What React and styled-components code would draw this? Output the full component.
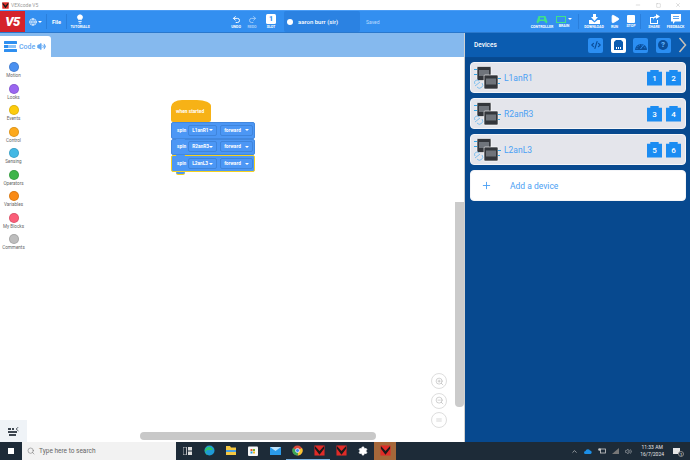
import React from 'react';
import styled, { createGlobalStyle } from 'styled-components';
import { Globe, Lightbulb, Undo2, Redo2, Play, Plus, ChevronUp, Volume2, Settings, Search, ZoomIn, ZoomOut, Equal, Minus, X, Square, Code2 } from 'lucide-react';

const GlobalStyle = createGlobalStyle`
  html, body { margin: 0; padding: 0; background: #fff; overflow: hidden; }
  * { box-sizing: border-box; }
`;

const Page = styled.div`
  width: 690px;
  height: 460px;
  display: flex;
  flex-direction: column;
  font-family: Roboto, "Liberation Sans", sans-serif;
  overflow: hidden;
`;

// window title bar
const TitleBar = styled.div`
  height: 10px;
  display: flex;
  align-items: center;
  background: #fff;
  padding: 0 2px;
  color: #9a9a9a;
  font-size: 5px;
`;
const TitleText = styled.span`
  margin-left: 2px;
  flex: 1;
`;
const WinBtn = styled.div`
  width: 20px;
  display: flex;
  justify-content: center;
  color: #777;
`;

// main toolbar
const Toolbar = styled.div`
  height: 23px;
  display: flex;
  align-items: stretch;
  background: #338ff0;
  border-top: 1px solid #4a9cf5;
  border-bottom: 1px solid #2a78cc;
  color: #fff;
`;
const Logo = styled.div`
  width: 25px;
  background: #d5232b;
  display: flex;
  align-items: center;
  justify-content: center;
  font-weight: 900;
  font-style: italic;
  font-size: 13px;
  letter-spacing: -0.5px;
`;
const Tool = styled.div`
  width: ${(p) => p.w || 20}px;
  margin-left: ${(p) => p.ml || 0}px;
  display: flex;
  flex-direction: column;
  align-items: center;
  justify-content: center;
  gap: 1px;
  font-size: 3.6px;
  font-weight: 700;
  white-space: nowrap;
  opacity: ${(p) => (p.dim ? 0.55 : 1)};
`;
const Divider = styled.div`
  width: 1px;
  margin: 3px 0;
  margin-left: ${(p) => p.ml || 0}px;
  background: #2a7fdc;
`;
const MenuText = styled.div`
  font-size: 5.5px;
  font-weight: 700;
  width: 19px;
  text-align: center;
  align-self: center;
`;
const Caret = styled.span`
  width: 0;
  height: 0;
  border-left: 2px solid transparent;
  border-right: 2px solid transparent;
  border-top: 2px solid ${(p) => p.color || '#fff'};
  display: inline-block;
  flex: none;
`;
const GlobeWrap = styled.div`
  width: 21px;
  display: flex;
  align-items: center;
  justify-content: center;
  gap: 1px;
`;
const SlotBadge = styled.div`
  width: 10px;
  height: 10px;
  border-radius: 1.5px;
  background: #fff;
  color: #338ff0;
  font-size: 7px;
  font-weight: 900;
  line-height: 10px;
  text-align: center;
`;
const ProjectName = styled.div`
  width: 76px;
  margin-left: 6px;
  background: #2b82e2;
  border-radius: 2px;
  display: flex;
  align-items: center;
  padding-left: 3px;
  gap: 5px;
  font-size: 6px;
  font-weight: 500;
  white-space: nowrap;
`;
const Hex = styled.span`
  width: 6px;
  height: 6px;
  background: #fff;
  border-radius: 50%;
  flex: none;
`;
const Saved = styled.div`
  font-size: 5px;
  color: #bcdcff;
  margin-left: 6px;
  align-self: center;
  width: 164px;
`;
const BrainRect = styled.div`
  width: 10px;
  height: 7px;
  border: 1.5px solid #3fe08a;
`;
const BrainIcon = styled.div`
  display: flex;
  align-items: center;
  gap: 2px;
`;
const StopIcon = styled.div`
  width: 8px;
  height: 8px;
  background: #fff;
  border-radius: 1px;
`;

// workspace
const Main = styled.div`
  flex: 1;
  display: flex;
  min-height: 0;
`;
const Workspace = styled.div`
  width: 465px;
  flex: none;
  display: flex;
  flex-direction: column;
  position: relative;
  border-right: 1px solid #d0d0d0;
`;
const TabBand = styled.div`
  height: 24px;
  background: #85b9ee;
  padding-top: 3px;
  display: flex;
  flex: none;
`;
const CodeTab = styled.div`
  width: 51px;
  background: #fff;
  border-radius: 0 3px 0 0;
  display: flex;
  align-items: center;
  gap: 2px;
  padding-left: 4px;
  color: #62a8f2;
  font-size: 7px;
  font-weight: 500;
`;
const CanvasRow = styled.div`
  flex: 1;
  display: flex;
  min-height: 0;
`;
const Palette = styled.div`
  width: 27px;
  display: flex;
  flex-direction: column;
  justify-content: space-between;
  flex: none;
`;
const Categories = styled.div`
  display: flex;
  flex-direction: column;
  padding-top: 5px;
`;
const Category = styled.div`
  height: 21.5px;
  display: flex;
  flex-direction: column;
  align-items: center;
  color: #666;
  font-size: 4.6px;
  white-space: nowrap;
  gap: 1px;
`;
const Dot = styled.div`
  width: 10px;
  height: 10px;
  border-radius: 50%;
  flex: none;
  background: ${(p) => p.color};
  border: 0.5px solid rgba(0, 0, 0, 0.12);
`;
const PaletteFoot = styled.div`
  height: 22px;
  background: #eff3f7;
  display: flex;
  align-items: center;
  justify-content: center;
`;
const Canvas = styled.div`
  flex: 1;
  position: relative;
  background: #fff;
`;

// script on the free canvas
const Stack = styled.div`
  position: absolute;
  left: 144px;
  top: 43px;
  display: flex;
  flex-direction: column;
  align-items: flex-start;
`;
const Hat = styled.div`
  width: 40px;
  height: 22px;
  background: #f7b216;
  border-radius: 11px 14px 2px 2px / 7px 6px 2px 2px;
  color: #fff;
  font-size: 4.8px;
  font-weight: 700;
  padding: 9px 0 0 5px;
  position: relative;
  white-space: nowrap;
  &::after {
    content: '';
    position: absolute;
    left: 5px;
    bottom: -2px;
    width: 9px;
    height: 2px;
    background: #f7b216;
    border-radius: 0 0 3px 3px;
  }
`;
const Block = styled.div`
  width: 84px;
  height: ${(p) => (p.selected ? 17 : 16.5)}px;
  background: #4c97f5;
  border-radius: 2px;
  display: flex;
  align-items: center;
  gap: 2px;
  padding-left: 5px;
  color: #fff;
  font-size: 4.8px;
  font-weight: 700;
  position: relative;
  border: 1px solid ${(p) => (p.selected ? '#f6d21f' : '#4288df')};
  &::after {
    content: '';
    position: absolute;
    left: 4px;
    bottom: -3px;
    width: 9px;
    height: 2px;
    background: #4c97f5;
    border-radius: 0 0 3px 3px;
    z-index: 1;
    box-shadow: ${(p) => (p.selected ? '0 1px 0 #f6d21f' : 'none')};
  }
`;
const Field = styled.div`
  height: 11px;
  width: ${(p) => p.w}px;
  margin-left: ${(p) => p.ml || 0}px;
  border: 0.5px solid #3f85dc;
  border-radius: 2px;
  display: flex;
  align-items: center;
  justify-content: space-between;
  padding: 0 3px;
`;

// zoom controls and scrollbars sit over the canvas
const ZoomStack = styled.div`
  position: absolute;
  right: 17px;
  bottom: 14px;
  display: flex;
  flex-direction: column;
  gap: 3.5px;
`;
const ZoomBtn = styled.div`
  width: 16px;
  height: 16px;
  border-radius: 50%;
  border: 1px solid #dedede;
  background: #fff;
  color: #9a9a9a;
  display: flex;
  align-items: center;
  justify-content: center;
`;
const VScroll = styled.div`
  position: absolute;
  right: 0;
  top: 145px;
  width: 9px;
  height: 205px;
  background: #cbcbcb;
  border-radius: 0 0 4px 4px;
`;
const HScroll = styled.div`
  position: absolute;
  left: 113px;
  bottom: 2px;
  width: 236px;
  height: 8px;
  background: #c8c8c8;
  border-radius: 4px;
`;

// devices panel
const Panel = styled.div`
  flex: 1;
  min-width: 0;
  background: #07498f;
  display: flex;
  flex-direction: column;
`;
const PanelHead = styled.div`
  height: 25px;
  background: #0b5cb0;
  border-bottom: 1px solid #084a92;
  display: flex;
  align-items: center;
  padding-left: 9px;
  color: #fff;
  font-size: 6.5px;
  font-weight: 500;
`;
const PanelTitle = styled.div`
  width: 114px;
`;
const HeadBtn = styled.div`
  width: 15px;
  height: 15px;
  border-radius: 2px;
  margin-right: 7.5px;
  background: ${(p) => (p.active ? '#fff' : '#2b8ef2')};
  color: ${(p) => (p.active ? '#0b5cb0' : '#0b4f9b')};
  display: flex;
  align-items: center;
  justify-content: center;
  flex: none;
`;
const HelpDot = styled.div`
  width: 10px;
  height: 10px;
  border-radius: 50%;
  background: #0b4f9b;
  color: #5fb0f7;
  font-size: 8px;
  font-weight: 900;
  line-height: 10px;
  text-align: center;
`;
const Cards = styled.div`
  display: flex;
  flex-direction: column;
  gap: 5px;
  padding: 4px 4px 0 5px;
`;
const Card = styled.div`
  height: 31px;
  background: ${(p) => (p.add ? '#fff' : '#e4e5eb')};
  border: 1px solid #f4f5f8;
  border-radius: 4px;
  display: flex;
  align-items: center;
  color: #4aa0f4;
  font-size: 8.5px;
`;
const CardIcon = styled.div`
  width: 33px;
  display: flex;
  justify-content: center;
  flex: none;
`;
const CardName = styled.div`
  flex: 1;
`;
const Ports = styled.div`
  display: flex;
  gap: 4px;
  margin-right: 4px;
`;
const Port = styled.div`
  width: 15px;
  height: 16px;
  background: #1b8cf2;
  color: #fff;
  font-size: 8px;
  font-weight: 500;
  display: flex;
  align-items: center;
  justify-content: center;
  padding-top: 2px;
  clip-path: polygon(0 14%, 22% 14%, 22% 0, 78% 0, 78% 14%, 100% 14%, 100% 100%, 0 100%);
`;
const AddIcon = styled.div`
  width: 39px;
  padding-left: 10px;
  display: flex;
  flex: none;
`;

// windows taskbar
const Taskbar = styled.div`
  height: 18px;
  flex: none;
  background: #1d2b38;
  display: flex;
  align-items: stretch;
  color: #e6e6e6;
`;
const StartBtn = styled.div`
  width: 22px;
  display: flex;
  align-items: center;
  justify-content: center;
`;
const WinLogo = styled.div`
  display: grid;
  grid-template-columns: 3px 3px;
  gap: 0.7px;
  & > i {
    width: 3px;
    height: 3px;
    background: #fff;
    display: block;
  }
`;
const SearchBox = styled.div`
  width: 154px;
  background: #f2f2f2;
  color: #666;
  font-size: 6.5px;
  display: flex;
  align-items: center;
  gap: 4px;
  padding-left: 5px;
`;
const TaskIcons = styled.div`
  display: flex;
`;
const TaskIcon = styled.div`
  width: 22px;
  display: flex;
  align-items: center;
  justify-content: center;
  background: ${(p) => (p.active ? '#a5683a' : 'transparent')};
  border-bottom: 1px solid ${(p) => (p.open ? '#7fb4e0' : 'transparent')};
`;
const Tray = styled.div`
  margin-left: auto;
  display: flex;
  align-items: center;
  gap: 6px;
  padding-right: 10px;
  font-size: 5px;
`;
const Clock = styled.div`
  text-align: center;
  line-height: 7.5px;
  margin: 0 3px 0 2px;
`;
const Notif = styled.div`
  width: 7px;
  height: 6px;
  background: #e6e6e6;
  position: relative;
`;
const NotifBadge = styled.span`
  position: absolute;
  right: -4px;
  bottom: -3px;
  width: 6px;
  height: 6px;
  border-radius: 50%;
  background: #1d2b38;
  border: 0.5px solid #888;
  color: #fff;
  font-size: 4px;
  line-height: 5px;
  text-align: center;
`;

const VexIcon = ({ size = 10 }) => (
  <svg width={size} height={size} viewBox="0 0 12 12">
    <rect x="0.5" y="0.5" width="11" height="11" fill="#e02b27" />
    <path d="M1 1 L6 6.500 L11 1 L11 4 L6 10.500 L1 4 Z" fill="#1a1a1a" />
  </svg>
);

const ControllerIcon = () => (
  <svg width="12" height="9" viewBox="0 0 12 9">
    <path d="M2.500 1h7l2 6-1 1.500L8 6H4L1.500 8.500 .5 7z" fill="#3fe08a" />
    <rect x="4" y="2.500" width="4" height="2" fill="#338ff0" />
  </svg>
);

const DownloadIcon = () => (
  <svg width="11" height="10" viewBox="0 0 11 10">
    <path d="M4 0h3v3h2L5.500 7 2 3h2z" fill="#fff" />
    <path d="M0 6h2.500l3 2.500 3-2.500H11v4H0z" fill="#fff" />
  </svg>
);

const ShareIcon = () => (
  <svg width="11" height="10" viewBox="0 0 11 10">
    <path d="M1 3h4v1H2v5h6V6h1v4H1z" fill="#fff" />
    <path d="M7 0l4 2.500L7 5V3.500C5.500 3.500 4.500 4.500 4 6c0-2.500 1-4 3-4z" fill="#fff" />
  </svg>
);

const FeedbackIcon = () => (
  <svg width="10" height="10" viewBox="0 0 10 10">
    <path d="M0 0h10v7.500H4L2 10V7.500H0z" fill="#fff" />
    <rect x="2" y="2" width="6" height="0.8" fill="#338ff0" />
    <rect x="2" y="4" width="6" height="0.8" fill="#338ff0" />
  </svg>
);

const GaugeIcon = () => (
  <svg width="12" height="9" viewBox="0 0 12 9">
    <path d="M0 9a6 6 0 0 1 12 0z" fill="#0b4f9b" />
    <path d="M2 8a4 4 0 0 1 8 0" fill="none" stroke="#2b8ef2" strokeWidth="0.8" strokeDasharray="1 1" />
    <path d="M5.500 8l3-4" stroke="#2b8ef2" strokeWidth="1" />
  </svg>
);

const BlocksIcon = ({ size = 13, color = '#2f8ff0' }) => (
  <svg width={size} height={size} viewBox="0 0 13 13">
    <rect x="0" y="1" width="13" height="3" rx="0.5" fill={color} />
    <rect x="0" y="5" width="4" height="3" fill={color} />
    <rect x="0" y="9" width="13" height="3" rx="0.5" fill={color} />
    <rect x="4" y="5" width="8" height="3" fill={color} opacity="0.55" />
  </svg>
);

const BackpackIcon = () => (
  <svg width="11" height="9" viewBox="0 0 11 9">
    <rect x="0" y="1" width="3" height="2" fill="#3d4650" />
    <rect x="4" y="1" width="2" height="2" fill="#3d4650" />
    <rect x="0" y="4" width="9" height="2" fill="#3d4650" />
    <rect x="1" y="7" width="7" height="2" fill="#3d4650" />
    <path d="M10.500 0L8 2l2.500 2" fill="none" stroke="#3d4650" strokeWidth="0.8" />
  </svg>
);

const MotorGroupIcon = () => (
  <svg width="27" height="24" viewBox="0 0 27 24">
    <rect x="3" y="0.5" width="14" height="14" rx="1" fill="#33363b" stroke="#fff" strokeWidth="0.6" />
    <rect x="5" y="4" width="10" height="6" fill="#6f747b" />
    <rect x="0" y="3" width="3" height="1" fill="#35a7e8" />
    <rect x="0" y="8" width="3" height="1" fill="#35a7e8" />
    <rect x="10" y="9" width="14" height="14" rx="1" fill="#33363b" stroke="#fff" strokeWidth="0.6" />
    <rect x="12" y="12.500" width="10" height="6" fill="#6f747b" />
    <rect x="24" y="12" width="3" height="1" fill="#35a7e8" />
    <rect x="24" y="17" width="2" height="1" fill="#35a7e8" />
    <path d="M1 20l5-4M1 18a2.500 2.500 0 0 1 4-3M3 21a2.500 2.500 0 0 0 5-4" stroke="#7fc0ee" strokeWidth="1" fill="none" />
  </svg>
);

const categories = [
  ['Motion', '#4a90f0'],
  ['Looks', '#9a66f0'],
  ['Events', '#fdcb0c'],
  ['Control', '#fda91b'],
  ['Sensing', '#43b8e4'],
  ['Operators', '#3eb54a'],
  ['Variables', '#f98a15'],
  ['My Blocks', '#fb5e78'],
  ['Comments', '#bdbdbd'],
];

const blocks = [
  { motor: 'L1anR1' },
  { motor: 'R2anR3' },
  { motor: 'L2anL3', selected: true },
];

const devices = [
  { name: 'L1anR1', ports: [1, 2] },
  { name: 'R2anR3', ports: [3, 4] },
  { name: 'L2anL3', ports: [5, 6] },
];

export default function App() {
  return (
    <Page>
      <GlobalStyle />
      <TitleBar>
        <VexIcon size={7} />
        <TitleText>VEXcode V5</TitleText>
        <WinBtn><Minus size={6} strokeWidth={1} /></WinBtn>
        <WinBtn><Square size={5} strokeWidth={1} /></WinBtn>
        <WinBtn><X size={6} strokeWidth={1} /></WinBtn>
      </TitleBar>

      <Toolbar>
        <Logo>V5</Logo>
        <GlobeWrap>
          <Globe size={8} />
          <Caret />
        </GlobeWrap>
        <Divider />
        <MenuText>File</MenuText>
        <Divider />
        <Tool w={26}>
          <Lightbulb size={10} fill="#fff" />
          TUTORIALS
        </Tool>
        <Tool w={14} ml={136}>
          <Undo2 size={9} strokeWidth={2.500} />
          UNDO
        </Tool>
        <Tool w={14} ml={2} dim>
          <Redo2 size={9} strokeWidth={2.500} />
          REDO
        </Tool>
        <Tool w={14} ml={5}>
          <SlotBadge>1</SlotBadge>
          SLOT
        </Tool>
        <ProjectName>
          <Hex />
          aaron burr (sir)
        </ProjectName>
        <Saved>Saved</Saved>
        <Tool w={24}>
          <ControllerIcon />
          CONTROLLER
        </Tool>
        <Tool w={20}>
          <BrainIcon>
            <BrainRect />
            <Caret />
          </BrainIcon>
          BRAIN
        </Tool>
        <Divider ml={4} />
        <Tool w={24} ml={3}>
          <DownloadIcon />
          DOWNLOAD
        </Tool>
        <Tool w={15} ml={1}>
          <Play size={10} fill="#fff" />
          RUN
        </Tool>
        <Tool w={18}>
          <StopIcon />
          STOP
        </Tool>
        <Divider />
        <Tool w={20} ml={3}>
          <ShareIcon />
          SHARE
        </Tool>
        <Tool w={23}>
          <FeedbackIcon />
          FEEDBACK
        </Tool>
      </Toolbar>

      <Main>
        <Workspace>
          <TabBand>
            <CodeTab>
              <BlocksIcon />
              Code
              <Volume2 size={9} strokeWidth={2.500} fill="#62a8f2" />
            </CodeTab>
          </TabBand>
          <CanvasRow>
            <Palette>
              <Categories>
                {categories.map(([label, color]) => (
                  <Category key={label}>
                    <Dot color={color} />
                    {label}
                  </Category>
                ))}
              </Categories>
              <PaletteFoot>
                <BackpackIcon />
              </PaletteFoot>
            </Palette>
            <Canvas>
              <Stack>
                <Hat>when started</Hat>
                {blocks.map((b) => (
                  <Block key={b.motor} selected={b.selected}>
                    spin
                    <Field w={29}>{b.motor}<Caret /></Field>
                    <Field w={33} ml={1}>forward<Caret /></Field>
                  </Block>
                ))}
              </Stack>
              <ZoomStack>
                <ZoomBtn><ZoomIn size={9} strokeWidth={1.200} /></ZoomBtn>
                <ZoomBtn><ZoomOut size={9} strokeWidth={1.200} /></ZoomBtn>
                <ZoomBtn><Equal size={8} strokeWidth={1.200} /></ZoomBtn>
              </ZoomStack>
              <VScroll />
              <HScroll />
            </Canvas>
          </CanvasRow>
        </Workspace>

        <Panel>
          <PanelHead>
            <PanelTitle>Devices</PanelTitle>
            <HeadBtn><Code2 size={10} strokeWidth={3} /></HeadBtn>
            <HeadBtn active>
              <svg width="9" height="10" viewBox="0 0 9 10">
                <path d="M2 0h5l2 2v8H0V2z" fill="#0b5cb0" />
                <rect x="2" y="7" width="1" height="2" fill="#fff" />
                <rect x="4" y="7" width="1" height="2" fill="#fff" />
                <rect x="6" y="7" width="1" height="2" fill="#fff" />
              </svg>
            </HeadBtn>
            <HeadBtn><GaugeIcon /></HeadBtn>
            <HeadBtn><HelpDot>?</HelpDot></HeadBtn>
            <svg width="10" height="16" viewBox="0 0 10 16">
              <path d="M1.500 1l6 7-6 7" fill="none" stroke="#c9c2b8" strokeWidth="1.500" />
            </svg>
          </PanelHead>
          <Cards>
            {devices.map((d) => (
              <Card key={d.name}>
                <CardIcon><MotorGroupIcon /></CardIcon>
                <CardName>{d.name}</CardName>
                <Ports>
                  {d.ports.map((n) => <Port key={n}>{n}</Port>)}
                </Ports>
              </Card>
            ))}
            <Card add>
              <AddIcon><Plus size={11} strokeWidth={2} /></AddIcon>
              Add a device
            </Card>
          </Cards>
        </Panel>
      </Main>

      <Taskbar>
        <StartBtn>
          <WinLogo><i /><i /><i /><i /></WinLogo>
        </StartBtn>
        <SearchBox>
          <Search size={8} strokeWidth={1.500} />
          Type here to search
        </SearchBox>
        <TaskIcons>
          <TaskIcon>
            <svg width="9" height="8" viewBox="0 0 9 8">
              <rect x="0" y="0" width="3.500" height="8" fill="none" stroke="#ddd" strokeWidth="0.8" />
              <rect x="5" y="0" width="4" height="3.500" fill="#ddd" />
              <rect x="5" y="4.500" width="4" height="3.500" fill="#ddd" />
            </svg>
          </TaskIcon>
          <TaskIcon>
            <svg width="11" height="11" viewBox="0 0 11 11">
              <circle cx="5.500" cy="5.500" r="5" fill="#1f9ad6" />
              <path d="M1 7a4 4 0 0 1 8-2H4a2.500 2.500 0 0 0 0 5A5 5 0 0 1 1 7z" fill="#2fc46b" />
            </svg>
          </TaskIcon>
          <TaskIcon>
            <svg width="10" height="9" viewBox="0 0 10 9">
              <path d="M0 0h4l1 1.500h5V9H0z" fill="#f5c842" />
              <rect x="0" y="4" width="10" height="2" fill="#4a9fe0" />
            </svg>
          </TaskIcon>
          <TaskIcon>
            <svg width="10" height="11" viewBox="0 0 10 11">
              <rect x="0" y="1.500" width="10" height="9.500" rx="1" fill="#f6f6f6" />
              <rect x="2.500" y="4" width="2" height="2" fill="#e2502c" />
              <rect x="5" y="4" width="2" height="2" fill="#6cb52d" />
              <rect x="2.500" y="6.500" width="2" height="2" fill="#1e9be0" />
              <rect x="5" y="6.500" width="2" height="2" fill="#f5b921" />
            </svg>
          </TaskIcon>
          <TaskIcon>
            <svg width="11" height="8" viewBox="0 0 11 8">
              <rect width="11" height="8" fill="#2b9bea" />
              <path d="M0 0l5.500 4L11 0" fill="#bde3fb" />
            </svg>
          </TaskIcon>
          <TaskIcon open>
            <svg width="11" height="11" viewBox="0 0 11 11">
              <circle cx="5.500" cy="5.500" r="5" fill="#dd4b3c" />
              <path d="M5.500 5.500L10 3A5 5 0 0 1 6 10.500z" fill="#f6c533" />
              <path d="M5.500 5.500L6 10.500A5 5 0 0 1 1 3z" fill="#3aa757" />
              <circle cx="5.500" cy="5.500" r="2" fill="#4a8af4" stroke="#fff" strokeWidth="0.7" />
            </svg>
          </TaskIcon>
          <TaskIcon open><VexIcon size={11} /></TaskIcon>
          <TaskIcon><VexIcon size={11} /></TaskIcon>
          <TaskIcon><Settings size={10} color="#fff" fill="#fff" /></TaskIcon>
          <TaskIcon active><VexIcon size={11} /></TaskIcon>
        </TaskIcons>
        <Tray>
          <ChevronUp size={7} />
          <svg width="8" height="5" viewBox="0 0 8 5">
            <path d="M1.500 5a1.500 1.500 0 0 1 0-3 2.500 2.500 0 0 1 4.500-.5A1.800 1.800 0 0 1 6.500 5z" fill="#1c8ee6" />
          </svg>
          <svg width="8" height="6" viewBox="0 0 8 6">
            <rect x="2.500" y="1" width="5" height="4" fill="none" stroke="#ccc" strokeWidth="0.8" />
            <circle cx="1.500" cy="1.500" r="1.300" fill="#ccc" />
          </svg>
          <svg width="7" height="6" viewBox="0 0 7 6">
            <path d="M0 6L7 0v6z" fill="#777" />
          </svg>
          <Volume2 size={7} strokeWidth={1.500} />
          <Clock>
            11:33 AM
            <br />
            16/7/2024
          </Clock>
          <Notif><NotifBadge>1</NotifBadge></Notif>
        </Tray>
      </Taskbar>
    </Page>
  );
}
